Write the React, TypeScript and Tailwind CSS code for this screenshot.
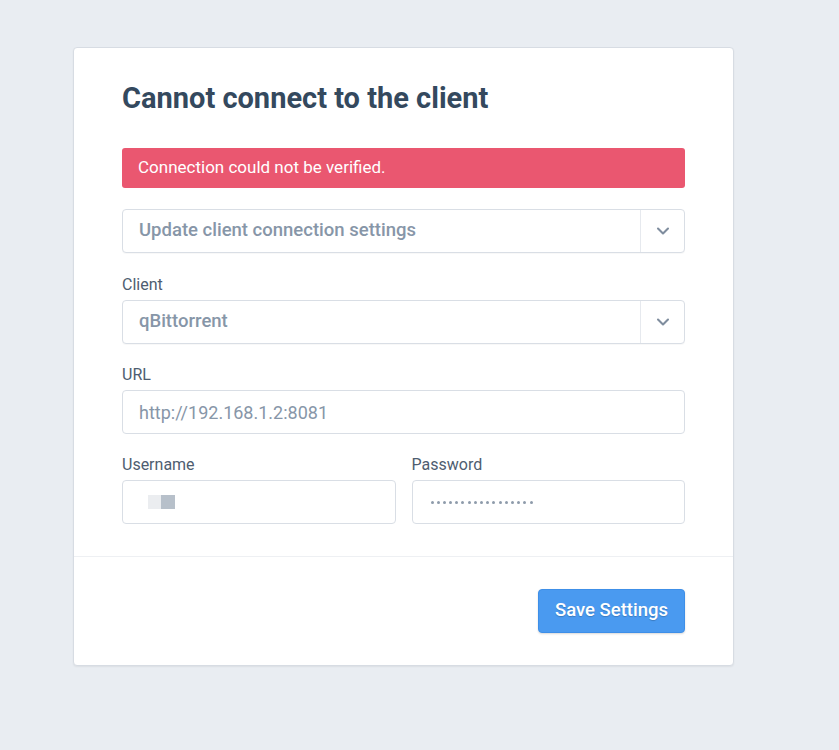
import { ChevronDown } from "lucide-react"

function Select({ value }: { value: string }) {
  return (
    <div className="flex h-[44px] w-full items-stretch rounded-[4px] border border-[#d9dee5] bg-white shadow-[0_1px_1px_rgba(0,0,0,0.03)]">
      <div className="flex flex-1 items-center px-4 text-[18.5px] font-medium text-[#8796a8]">{value}</div>
      <div className="flex w-[44px] items-center justify-center border-l border-[#e6e9ee]">
        <ChevronDown className="h-5 w-5 text-[#7f8d9e]" strokeWidth={2.5} />
      </div>
    </div>
  )
}

function Field({ label, children }: { label: string; children: React.ReactNode }) {
  return (
    <div className="flex flex-col">
      <label className="mb-[5px] text-[16px] leading-[20px] text-[#4e5d70]">{label}</label>
      {children}
    </div>
  )
}

function Input({ children }: { children?: React.ReactNode }) {
  return (
    <div className="flex h-[44px] w-full items-center rounded-[4px] border border-[#d9dee5] bg-white px-4 text-[18px] text-[#8796a8]">
      {children}
    </div>
  )
}

export default function App() {
  const dots = Array.from({ length: 17 })
  return (
    <div className="min-h-[750px] w-full bg-[#e9edf2] pt-[47px] pl-[73px]" style={{ fontFamily: "Roboto, 'Liberation Sans', sans-serif" }}>
      <div className="w-[661px] rounded-[4px] border border-[#d7dce3] bg-white shadow-[0_1px_2px_rgba(0,0,0,0.06)]">
        <div className="px-[48px] pt-[33px] pb-[32px]">
          <h1 className="text-[29px] font-bold leading-[34px] text-[#34495e]">Cannot connect to the client</h1>
          <div className="mt-[33px] flex h-[40px] items-center rounded-[3px] bg-[#ea5770] px-4 text-[17px] text-white">
            Connection could not be verified.
          </div>
          <div className="mt-[21px]">
            <Select value="Update client connection settings" />
          </div>
          <div className="mt-[22px] flex flex-col gap-[21px]">
            <Field label="Client">
              <Select value="qBittorrent" />
            </Field>
            <Field label="URL">
              <Input>http://192.168.1.2:8081</Input>
            </Field>
            <div className="grid grid-cols-2 gap-4">
              <Field label="Username">
                <Input>
                  <span className="ml-[9px] inline-block h-[14px] w-[13px] bg-[#ebedf0]" />
                  <span className="inline-block h-[14px] w-[14px] bg-[#b7c0ca]" />
                </Input>
              </Field>
              <Field label="Password">
                <Input>
                  <div className="ml-[2px] flex gap-[3.2px]">
                    {dots.map((_, i) => (
                      <span key={i} className="h-[3px] w-[3px] rounded-full bg-[#8e9bab]" />
                    ))}
                  </div>
                </Input>
              </Field>
            </div>
          </div>
        </div>
        <div className="flex justify-end border-t border-[#eef0f3] px-[48px] pt-[32px] pb-[32px]">
          <button className="h-[44px] rounded-[4px] border border-[#3e8fe8] bg-[#4a9af0] px-[16px] text-[18.5px] font-medium text-white shadow-[0_1px_2px_rgba(0,0,0,0.15)] [text-shadow:0_1px_1px_rgba(0,0,0,0.2)]">
            Save Settings
          </button>
        </div>
      </div>
    </div>
  )
}
